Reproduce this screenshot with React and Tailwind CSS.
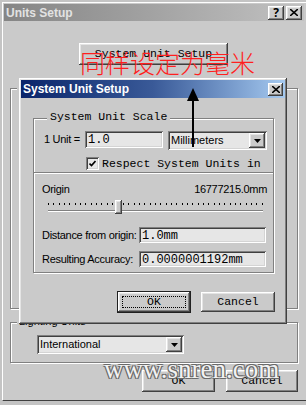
import React from 'react'

const raised = 'shadow-[inset_-1px_-1px_0_#404040,inset_1px_1px_0_#ffffff,inset_-2px_-2px_0_#808080,inset_2px_2px_0_#e4e4e4]'
const sunken = 'shadow-[inset_1px_1px_0_#808080,inset_-1px_-1px_0_#ffffff,inset_2px_2px_0_#404040,inset_-2px_-2px_0_#d4d4d4]'
const etched = 'border border-[#808080] shadow-[1px_1px_0_#ffffff,inset_1px_1px_0_#ffffff]'

const mono = "font-['Liberation_Mono','DejaVu_Sans_Mono',monospace]"
const sans = "font-['Liberation_Sans',Arial,sans-serif]"

function TitleButton({ children, className = '' }) {
    return (
        <div className={`flex items-center justify-center bg-[#cacaca] text-black font-bold text-[12px] leading-none ${raised} ${className}`}>
            {children}
        </div>
    )
}

function DropArrow() {
    return (
        <div className={`w-[16px] h-full flex items-center justify-center bg-[#cacaca] ${raised}`}>
            <svg width="7" height="4" viewBox="0 0 7 4"><path d="M0 0h7L3.5 4z" fill="#000" /></svg>
        </div>
    )
}

function Dropdown({ text, className = '' }) {
    return (
        <div className={`flex items-stretch bg-[#e6e6e6] p-[2px] ${sunken} ${className}`}>
            <div className={`flex-1 pl-[1px] text-[11px] leading-none flex items-center ${sans}`}>{text}</div>
            <DropArrow />
        </div>
    )
}

function Button({ children, className = '', focus = false }) {
    return (
        <div className={`flex items-center justify-center bg-[#cacaca] text-[11.5px] ${mono} ${raised} ${focus ? 'outline outline-1 outline-[#202020]' : ''} ${className}`}>
            {focus
                ? <div className="w-[calc(100%-8px)] h-[calc(100%-8px)] border border-dotted border-black flex items-center justify-center">{children}</div>
                : children}
        </div>
    )
}

function SystemUnitSetup() {
    const ticks = Array.from({ length: 41 })
    return (
        <div className={`absolute left-[19px] top-[78px] w-[268px] h-[246px] bg-[#cacaca] p-[2px] flex flex-col ${raised}`}>
            {/* title bar */}
            <div className="h-[18px] flex items-center justify-between bg-gradient-to-r from-[#0a246a] via-[#3a5a98] to-[#a6caf0] pl-[2px] pr-[2px]">
                <span className={`text-white font-bold text-[12px] leading-none ${sans}`}>System Unit Setup</span>
                <TitleButton className="w-[15px] h-[13px]">
                    <svg width="8" height="7" viewBox="0 0 8 7"><path d="M0 0l8 7M8 0L0 7" stroke="#000" strokeWidth="1.6" /></svg>
                </TitleButton>
            </div>

            {/* System Unit Scale group */}
            <div className={`relative mt-[20px] ml-[12px] w-[241px] h-[155px] flex flex-col ${etched}`}>
                <span className={`absolute -top-[8px] left-[13px] px-[3px] bg-[#cacaca] text-[11.5px] leading-none ${mono}`}>System Unit Scale</span>

                <div className="mt-[12px] flex items-start">
                    <span className={`ml-[10px] w-[41px] text-[11px] leading-[17px] tracking-[-0.3px] ${sans}`}>1 Unit =</span>
                    <div className={`w-[78px] h-[17px] bg-[#e6e6e6] pl-[3px] pt-[3px] text-[12px] leading-none ${mono} ${sunken}`}>1.0</div>
                    <Dropdown text="Millimeters" className="ml-[5px] w-[99px] h-[19px]" />
                </div>

                <div className="mt-[7px] ml-[52px] flex items-center h-[13px]">
                    <div className={`w-[13px] h-[13px] bg-[#e8e8e8] flex items-center justify-center ${sunken}`}>
                        <svg width="7" height="7" viewBox="0 0 7 7"><path d="M0.5 3.5l2 2 4-4.5" stroke="#000" strokeWidth="1.6" fill="none" /></svg>
                    </div>
                    <span className={`ml-[3px] text-[11.5px] leading-none ${mono}`}>Respect System Units in</span>
                </div>

                <div className="mt-[2px] h-[2px] border-t border-[#808080] border-b border-b-white" />

                <div className={`mt-[8px] pl-[8px] pr-[6px] flex justify-between text-[11px] leading-[14px] tracking-[-0.3px] ${sans}`}>
                    <span>Origin</span>
                    <span>16777215.0mm</span>
                </div>

                {/* slider */}
                <div className="relative mt-[4px] ml-[14px] w-[215px] h-[14px]">
                    <div className="absolute left-0 right-0 top-[3px] flex justify-between">
                        {ticks.map((_, i) => <div key={i} className="w-[1px] h-[2px] bg-black" />)}
                    </div>
                    <div className="absolute left-0 right-0 top-[10px] h-[2px] border-t border-[#808080] border-b border-b-white" />
                    <div className={`absolute left-[67px] top-0 w-[7px] h-[14px] bg-[#cacaca] ${raised}`} />
                </div>

                <div className="mt-[13px] flex items-center">
                    <span className={`ml-[8px] w-[97px] text-[11px] leading-none tracking-[-0.3px] ${sans}`}>Distance from origin:</span>
                    <div className={`w-[127px] h-[16px] bg-[#e6e6e6] pl-[3px] pt-[3px] text-[12px] leading-none ${mono} ${sunken}`}>1.0mm</div>
                </div>
                <div className="mt-[8px] flex items-center">
                    <span className={`ml-[8px] w-[97px] text-[11px] leading-none tracking-[-0.3px] ${sans}`}>Resulting Accuracy:</span>
                    <div className={`w-[127px] h-[16px] bg-[#e6e6e6] pl-[3px] pt-[3px] text-[12px] leading-none ${mono} ${sunken}`}>0.0000001192mm</div>
                </div>
            </div>

            <div className="mt-[19px] flex justify-end gap-[11px] pr-[10px]">
                <Button focus className="w-[72px] h-[20px]">OK</Button>
                <Button className="w-[74px] h-[20px]">Cancel</Button>
            </div>
        </div>
    )
}

export default function App() {
    return (
        <div className="relative w-[306px] h-[405px] overflow-hidden bg-[#c4c4c4] pt-[2px] pl-[2px] text-black">
            <div className="h-[399px] bg-[#cacaca] border-l border-t border-white border-b border-b-[#404040] pt-[1px] pl-[1px] flex flex-col">
                {/* outer title bar (inactive) */}
                <div className="h-[17px] mr-[2px] flex items-center justify-between bg-gradient-to-r from-[#858585] to-[#c2c2c2] pl-[2px] pr-[2px]">
                    <span className={`text-[#e2e2e2] font-bold text-[12px] leading-none ${sans}`}>Units Setup</span>
                    <div className="flex gap-[2px]">
                        <TitleButton className="w-[16px] h-[14px]">?</TitleButton>
                        <TitleButton className="w-[16px] h-[14px]">
                            <svg width="8" height="7" viewBox="0 0 8 7"><path d="M0 0l8 7M8 0L0 7" stroke="#000" strokeWidth="1.6" /></svg>
                        </TitleButton>
                    </div>
                </div>

                <Button className="mt-[22px] ml-[75px] w-[149px] h-[22px]">System Unit Setup</Button>

                <div className={`relative mt-[23px] ml-[6px] w-[288px] h-[221px] ${etched}`}>
                    <span className={`absolute -top-[7px] left-[6px] px-[2px] bg-[#cacaca] text-[11px] leading-none ${sans}`}>Display Unit Scale</span>
                </div>

                <div className={`relative mt-[13px] ml-[6px] w-[288px] h-[41px] ${etched}`}>
                    <span className={`absolute -top-[7px] left-[6px] px-[2px] bg-[#cacaca] text-[11px] leading-none ${sans}`}>Lighting Units</span>
                    <Dropdown text="International" className="mt-[12px] ml-[26px] w-[147px] h-[19px]" />
                </div>

                <div className="mt-[7px] flex gap-[11px] ml-[138px]">
                    <Button className="w-[73px] h-[22px]">OK</Button>
                    <Button className="w-[72px] h-[22px]">Cancel</Button>
                </div>
            </div>

            <SystemUnitSetup />

            {/* annotation: red caption and arrow */}
            <div className="absolute left-[80px] top-[50px] text-[25px] leading-none text-[#ff1f1f] font-light font-['Noto_Sans_CJK_SC',sans-serif]">同样设定为毫米</div>
            <svg className="absolute left-[186px] top-[88px]" width="14" height="60" viewBox="0 0 14 60">
                <path d="M7 0L13 13H1z" fill="#000" />
                <path d="M7 10V59" stroke="#000" strokeWidth="2" />
            </svg>

            {/* watermark */}
            <div className="absolute left-[104px] top-[356px] text-[27px] leading-none text-[#f2f2f2] font-['Liberation_Serif',serif] [text-shadow:1px_1px_0_#6a6a6a,-1px_-1px_0_#6a6a6a,1px_-1px_0_#6a6a6a,-1px_1px_0_#6a6a6a]">www.snren.com</div>
        </div>
    )
}
